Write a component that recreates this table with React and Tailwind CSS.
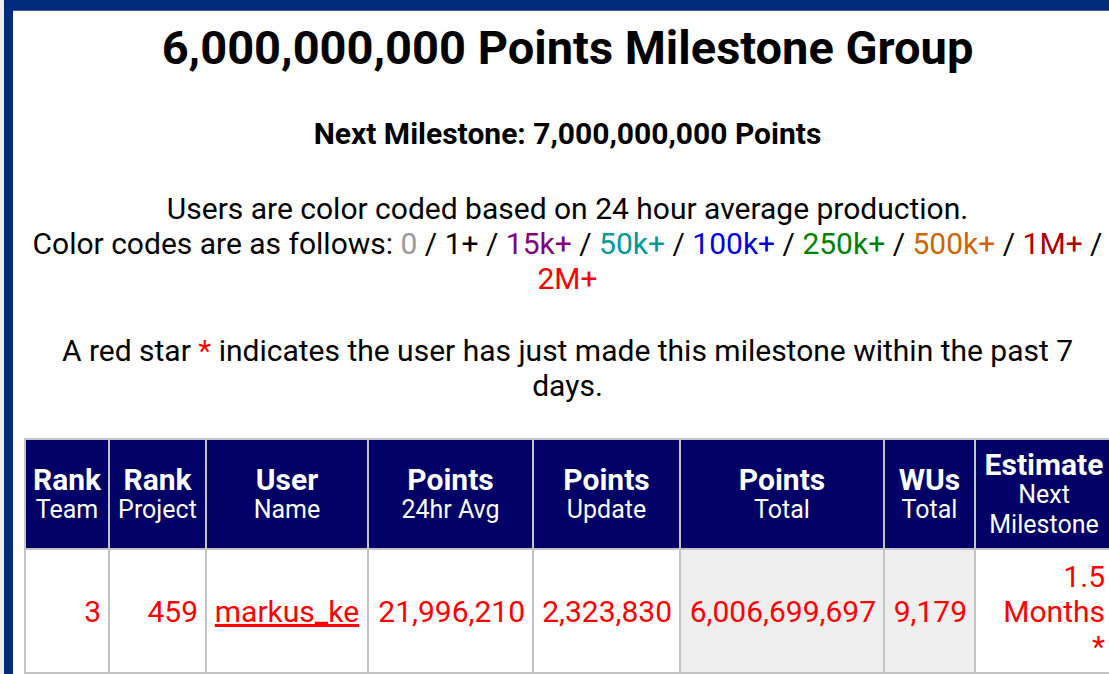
import React from 'react';

const codes = [
  { label: '0', cls: 'text-[#999999]' },
  { label: '1+', cls: 'text-black' },
  { label: '15k+', cls: 'text-[#800080]' },
  { label: '50k+', cls: 'text-[#009999]' },
  { label: '100k+', cls: 'text-[#0000dd]' },
  { label: '250k+', cls: 'text-[#008000]' },
  { label: '500k+', cls: 'text-[#cc6600]' },
  { label: '1M+', cls: 'text-[#aa0000]' },
];

const headers = [
  { top: 'Rank', sub: ['Team'], w: 'w-[84px]' },
  { top: 'Rank', sub: ['Project'], w: 'w-[97px]' },
  { top: 'User', sub: ['Name'], w: 'w-[162px]' },
  { top: 'Points', sub: ['24hr Avg'], w: 'w-[165px]' },
  { top: 'Points', sub: ['Update'], w: 'w-[147px]' },
  { top: 'Points', sub: ['Total'], w: 'w-[204px]' },
  { top: 'WUs', sub: ['Total'], w: 'w-[91px]' },
  { top: 'Estimate', sub: ['Next', 'Milestone'], w: 'w-[138px]' },
];

const cell = 'border-2 border-[#c4c4c4] px-[7px] text-right whitespace-nowrap';

export default function App() {
  return (
    <div className="w-screen h-screen overflow-hidden bg-[#eeeeee] pl-[4px] font-['Roboto',sans-serif]">
      <div className="w-[1118px] min-h-full bg-white border-l-[9px] border-t-[10px] border-[#002a7a] shadow-[inset_0_1px_0_#3a5f9f]">
        <h1 className="text-center font-bold text-[47px] leading-[55px] pt-[10px] text-black">
          6,000,000,000 Points Milestone Group
        </h1>

        <p className="text-center font-bold text-[30px] leading-[35px] mt-[41px]">
          Next Milestone: 7,000,000,000 Points
        </p>

        <p className="text-center text-[30px] leading-[35px] mt-[40px] px-[10px]">
          Users are color coded based on 24 hour average production.
          <br />
          Color codes are as follows:{' '}
          {codes.map((c) => (
            <React.Fragment key={c.label}>
              <span className={c.cls}>{c.label}</span> /{' '}
            </React.Fragment>
          ))}
          <span className="text-[#ff0000]">2M+</span>
        </p>

        <p className="text-center text-[30px] leading-[35px] mt-[37px] px-[12px]">
          A red star <span className="text-[#ff0000]">*</span> indicates the user has just made this milestone within the past 7 days.
        </p>

        <table className="table-fixed w-[1088px] ml-[11px] mt-[35px] border-collapse border-2 border-[#c4c4c4]">
          <thead>
            <tr className="bg-[#000066] text-white h-[110px]">
              {headers.map((h, i) => (
                <th key={i} className={`${h.w} border-2 border-[#c4c4c4] px-[4px] align-middle text-center`}>
                  <div className="font-bold text-[30px] leading-[31px]">{h.top}</div>
                  {h.sub.map((s) => (
                    <div key={s} className="font-normal text-[25px] leading-[30px]">{s}</div>
                  ))}
                </th>
              ))}
            </tr>
          </thead>
          <tbody>
            <tr className="h-[124px] text-[30px] leading-[35px] text-[#ff0000]">
              <td className={cell}>3</td>
              <td className={cell}>459</td>
              <td className="border-2 border-[#c4c4c4] px-[7px] text-center">
                <a href="#" className="underline text-[#ff0000]">markus_ke</a>
              </td>
              <td className={cell}>21,996,210</td>
              <td className={cell}>2,323,830</td>
              <td className={`${cell} bg-[#efefef]`}>6,006,699,697</td>
              <td className={`${cell} bg-[#efefef]`}>9,179</td>
              <td className="border-2 border-[#c4c4c4] px-[7px] text-right">
                1.5
                <br />
                Months
                <br />
                *
              </td>
            </tr>
          </tbody>
        </table>
      </div>
    </div>
  );
}
